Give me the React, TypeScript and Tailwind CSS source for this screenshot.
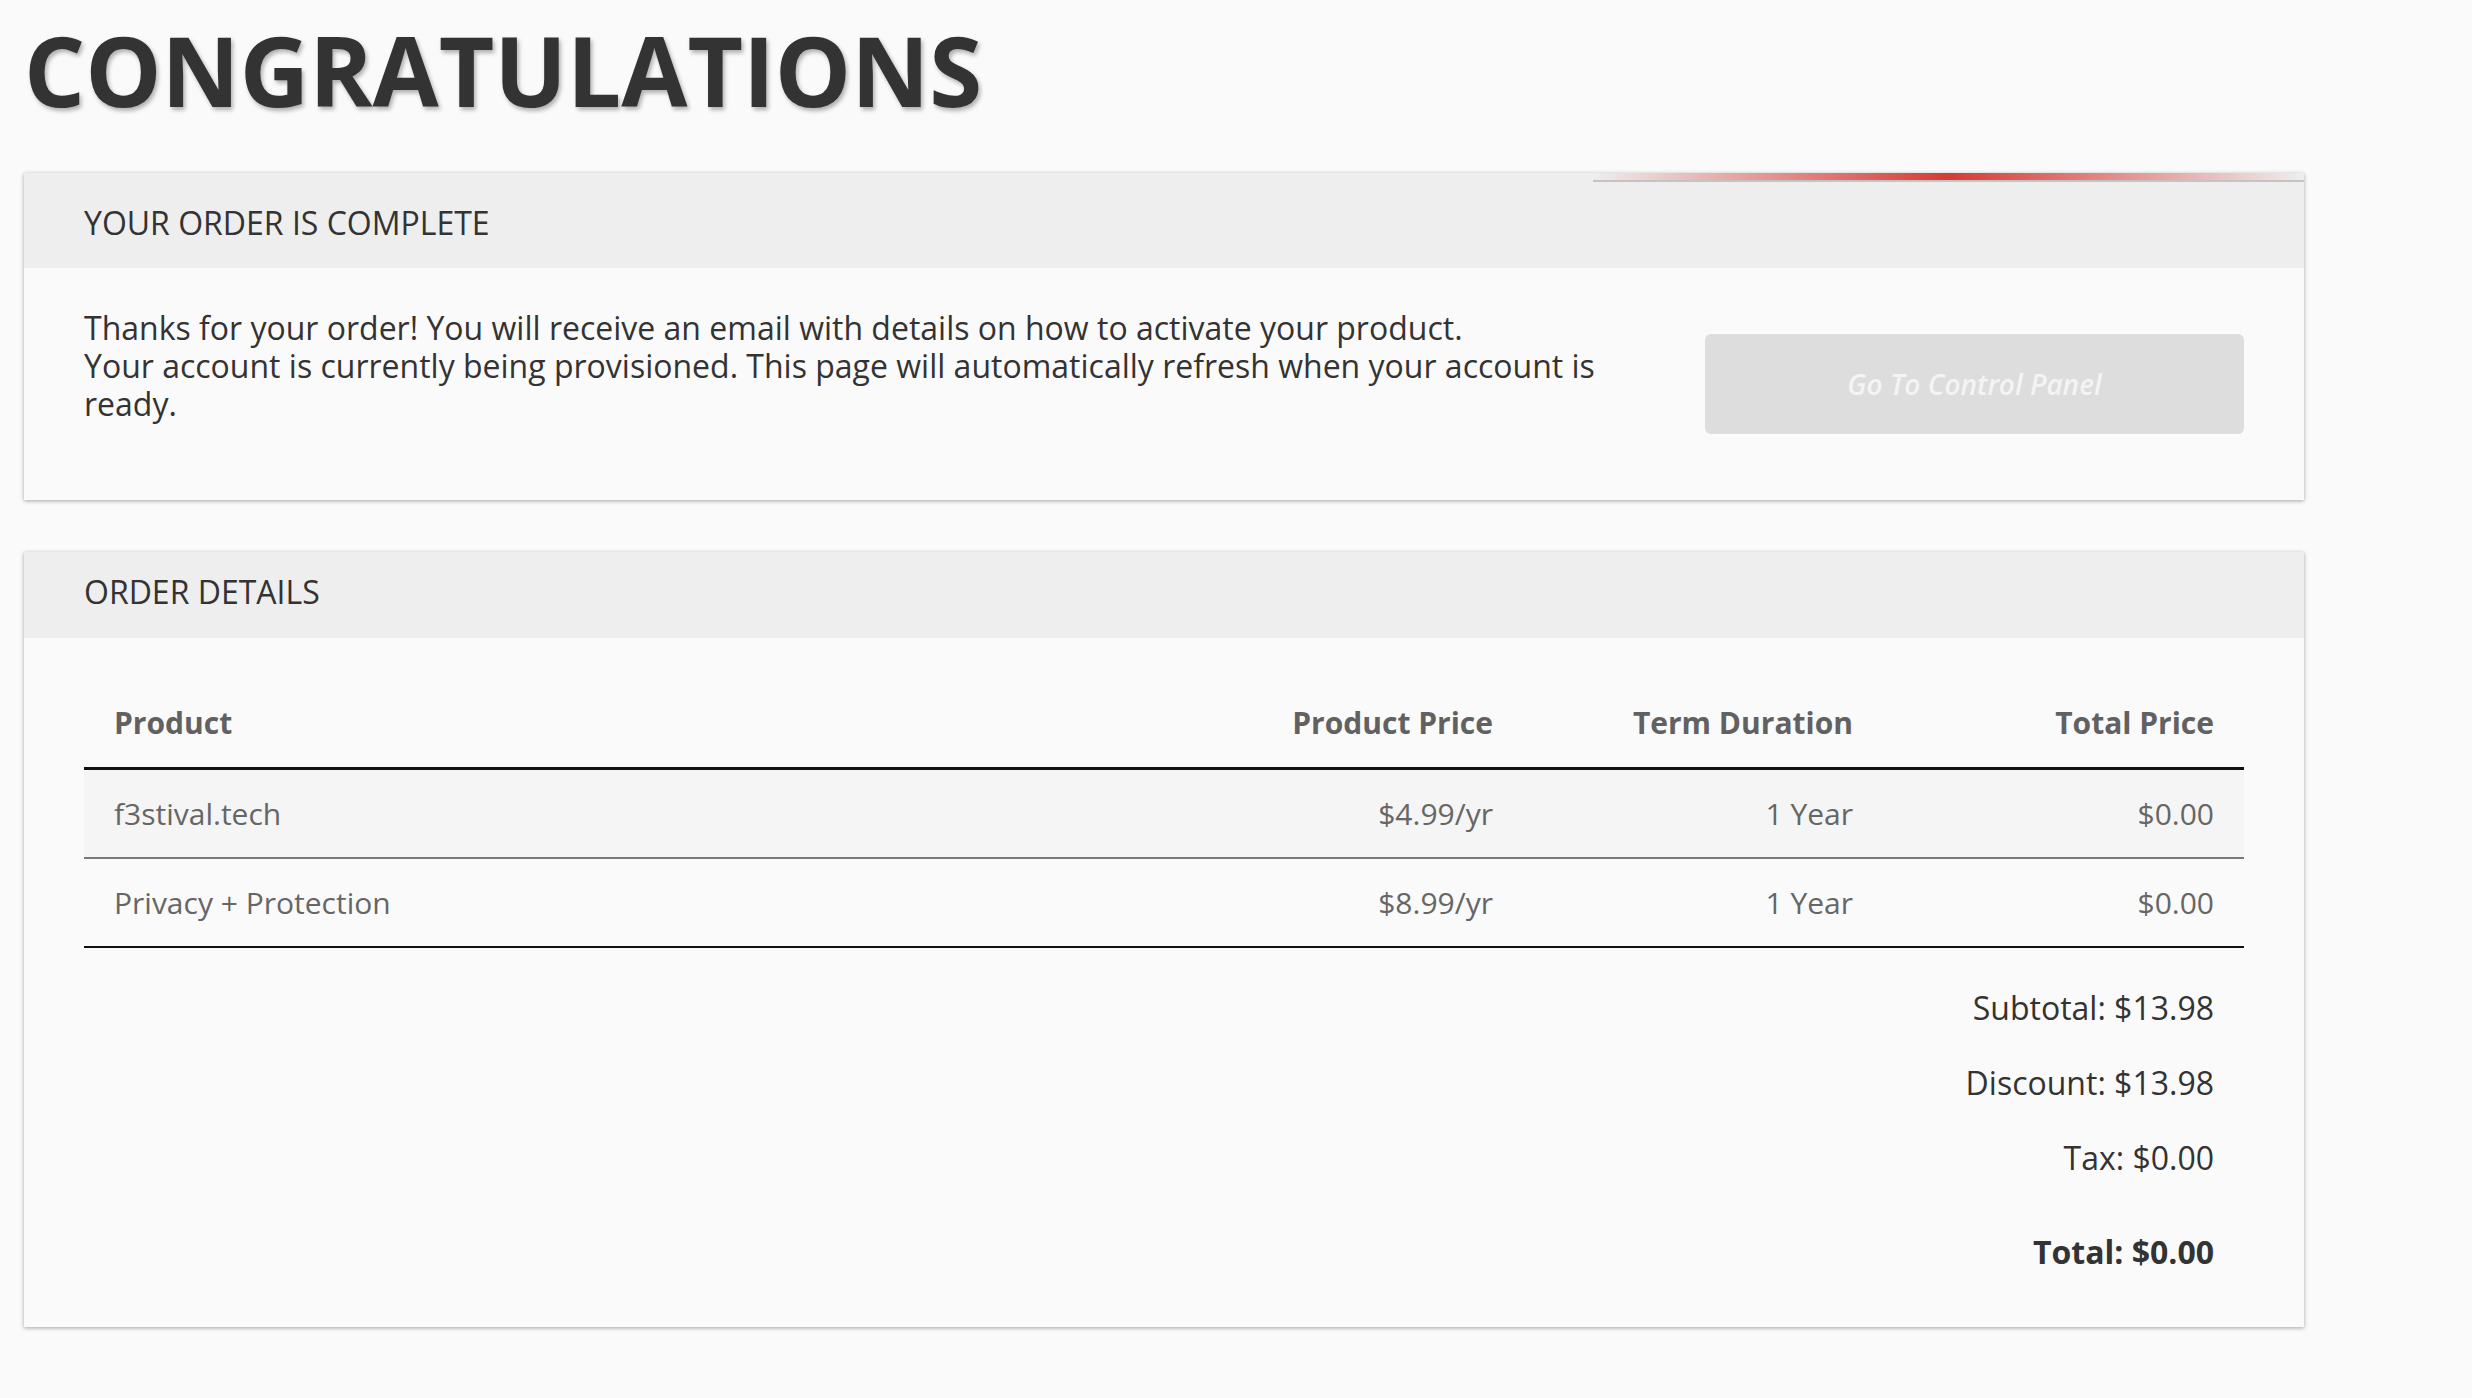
import React from 'react';

const FONT = "font-['Open_Sans',_'Liberation_Sans',_sans-serif]";

interface Line {
  product: string;
  price: string;
  term: string;
  total: string;
}

const LINES: Line[] = [
  { product: 'f3stival.tech', price: '$4.99/yr', term: '1 Year', total: '$0.00' },
  { product: 'Privacy + Protection', price: '$8.99/yr', term: '1 Year', total: '$0.00' },
];

const COLS = 'grid grid-cols-[1fr_360px_360px_361px]';

export default function App() {
  return (
    <div className={`${FONT} min-h-screen w-full bg-[#fafafa] text-[#333]`}>
      <div className="w-[2304px] pl-[24px]">
        <h1 className="pt-[22px] text-[96px] font-bold leading-none text-[#333] [text-shadow:2px_3px_4px_rgba(0,0,0,0.3)]">
          CONGRATULATIONS
        </h1>

        {/* order complete */}
        <section className="relative mt-[55px] bg-[#fafafa] shadow-[0_1px_4px_rgba(0,0,0,0.35)]">
          <div className="absolute right-0 top-0 h-[9px] w-[711px] border-b-2 border-[#c4c4c4] bg-[linear-gradient(to_right,rgba(214,58,51,0),rgba(214,58,51,1)_50%,rgba(214,58,51,0))]" />
          <div className="flex h-[95px] items-center bg-[#eeeeee] px-[60px] pt-[4px] text-[32px]">
            YOUR ORDER IS COMPLETE
          </div>
          <div className="grid grid-cols-[1560px_1fr] px-[60px] pb-[66px]">
            <div className="pt-[41px] text-[32px] leading-[38px]">
              <p>Thanks for your order! You will receive an email with details on how to activate your product.</p>
              <p>Your account is currently being provisioned. This page will automatically refresh when your account is ready.</p>
            </div>
            <div className="flex justify-end pt-[66px]">
              <button className="h-[100px] w-[539px] rounded-[6px] bg-[#dddddd] text-[28px] font-semibold italic text-[#f4f4f4]">
                Go To Control Panel
              </button>
            </div>
          </div>
        </section>

        {/* order details */}
        <section className="mt-[52px] bg-[#fafafa] shadow-[0_1px_4px_rgba(0,0,0,0.35)]">
          <div className="flex h-[86px] items-center bg-[#eeeeee] px-[60px] pb-[6px] text-[32px]">
            ORDER DETAILS
          </div>
          <div className="px-[60px] pt-[40px] pb-[56px]">
            <div className={`${COLS} h-[92px] items-center border-b-[3px] border-[#111] text-[30px] font-bold text-[#616161]`}>
              <div className="px-[30px]">Product</div>
              <div className="px-[30px] text-right">Product Price</div>
              <div className="px-[30px] text-right">Term Duration</div>
              <div className="px-[30px] text-right">Total Price</div>
            </div>
            {LINES.map((line, i) => (
              <div
                key={line.product}
                className={`${COLS} h-[89px] items-center text-[30px] text-[#666] ${
                  i === 0 ? 'border-b-2 border-[#7a7a7a] bg-[#f5f5f5]' : 'border-b-2 border-[#111]'
                }`}
              >
                <div className="px-[30px]">{line.product}</div>
                <div className="px-[30px] text-right">{line.price}</div>
                <div className="px-[30px] text-right">{line.term}</div>
                <div className="px-[30px] text-right">{line.total}</div>
              </div>
            ))}

            <div className="flex flex-col items-end pr-[30px] pt-[41px] text-[32px] leading-[38px] text-[#333]">
              <p>Subtotal: $13.98</p>
              <p className="mt-[37px]">Discount: $13.98</p>
              <p className="mt-[37px]">Tax: $0.00</p>
              <p className="mt-[56px] font-bold">Total: $0.00</p>
            </div>
          </div>
        </section>
      </div>
    </div>
  );
}
